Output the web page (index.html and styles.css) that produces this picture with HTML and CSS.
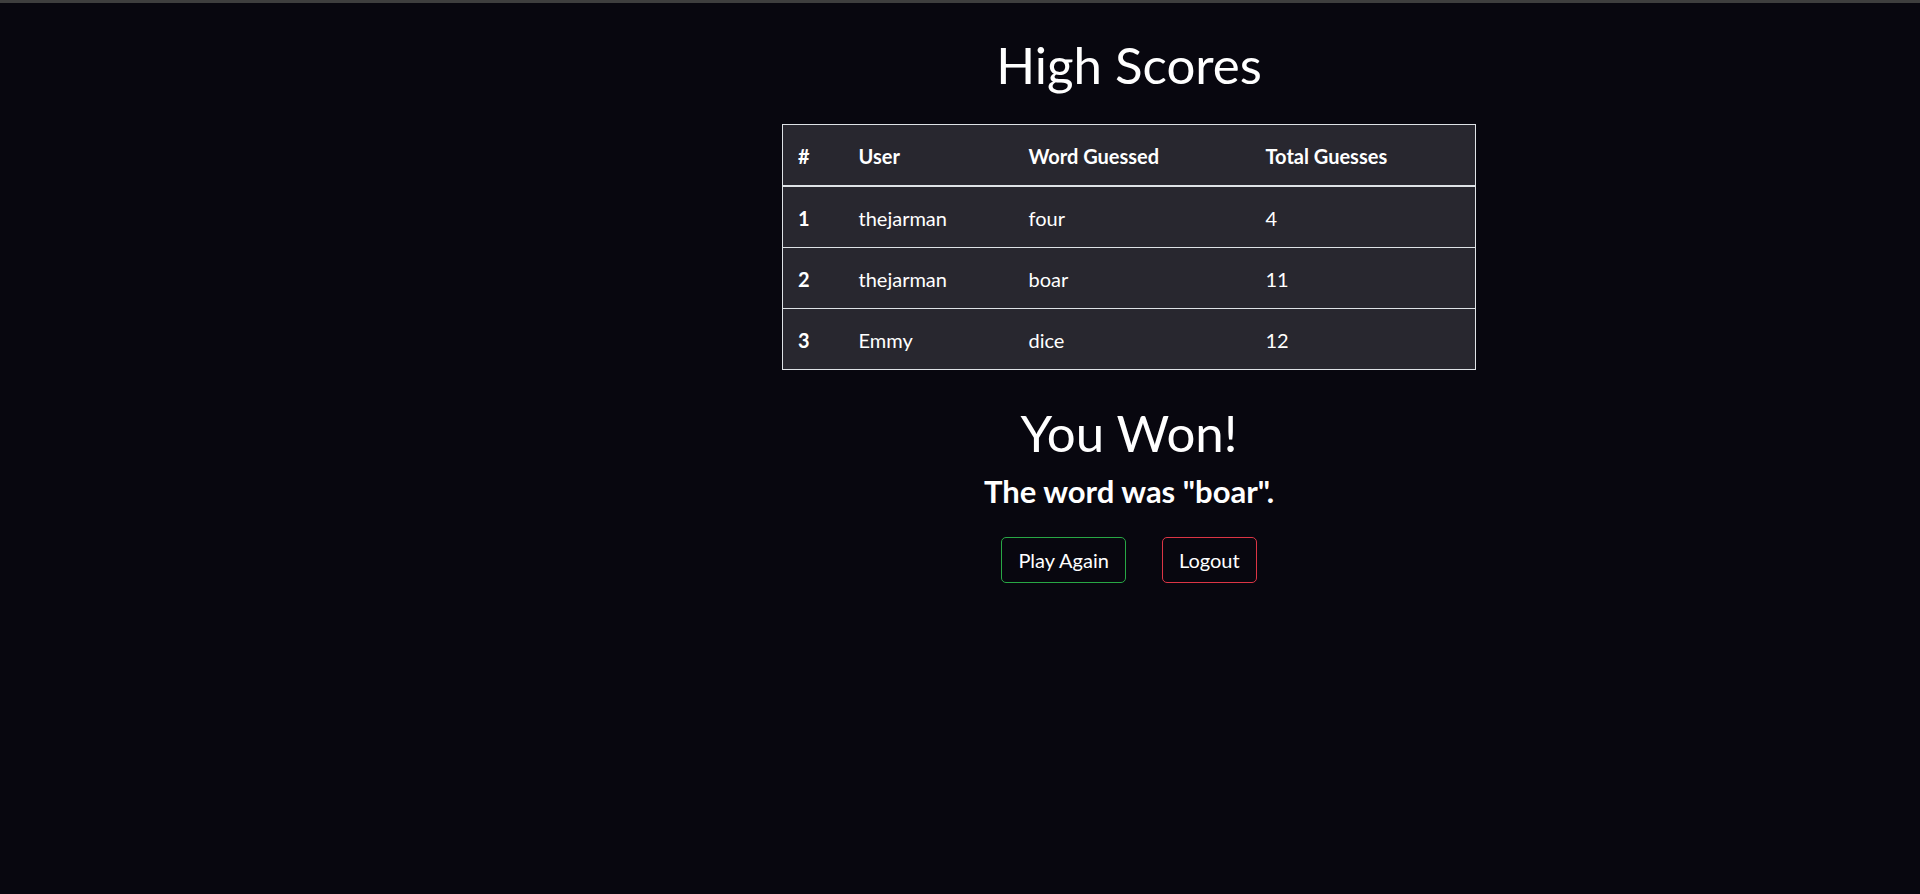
FILE: index.html
```html
<!DOCTYPE html>
<html lang="en">
<head>
<meta charset="utf-8">
<title>High Scores</title>
<link rel="stylesheet" href="styles.css">
</head>
<body>
<div class="page">
  <aside class="side"></aside>
  <main class="main">
    <h1 class="title">High Scores</h1>
    <table class="scores">
      <colgroup>
        <col class="c1"><col class="c2"><col class="c3"><col class="c4">
      </colgroup>
      <thead>
        <tr><th>#</th><th>User</th><th>Word Guessed</th><th>Total Guesses</th></tr>
      </thead>
      <tbody>
        <tr><th>1</th><td>thejarman</td><td>four</td><td>4</td></tr>
        <tr><th>2</th><td>thejarman</td><td>boar</td><td>11</td></tr>
        <tr><th>3</th><td>Emmy</td><td>dice</td><td>12</td></tr>
      </tbody>
    </table>
    <h1 class="result">You Won!</h1>
    <h4 class="word">The word was "boar".</h4>
    <div class="actions">
      <button class="btn btn-green" type="button">Play Again</button>
      <button class="btn btn-red" type="button">Logout</button>
    </div>
  </main>
</div>
</body>
</html>
```
FILE: styles.css
```css
html, body {
  margin: 0;
  padding: 0;
}
body {
  background: #08070f;
  color: #fff;
  font-family: Lato, "Liberation Sans", sans-serif;
  font-size: 20px;
  line-height: 30px;
  border-top: 3px solid #3e3e3e;
  min-height: 891px;
}
.page {
  display: flex;
}
.side {
  width: 338px;
  flex: none;
}
.main {
  flex: 1;
  display: flex;
  flex-direction: column;
  align-items: center;
}
.title, .result {
  font-size: 51px;
  line-height: 60px;
  font-weight: 400;
  margin: 0 0 10px;
}
.title {
  margin-top: 32px;
  margin-bottom: 29px;
}
.result {
  margin-top: 33px;
}
.word {
  font-size: 31px;
  line-height: 36px;
  font-weight: 700;
  margin: 0 0 28px;
}
.scores {
  width: 693px;
  table-layout: fixed;
  border-collapse: collapse;
  background: #28272f;
  border: 1px solid #dee2e6;
}
.c1 { width: 61px; }
.c2 { width: 170px; }
.c3 { width: 237px; }
.c4 { width: 225px; }
.scores th, .scores td {
  padding: 16px 15px 14px;
  text-align: left;
  vertical-align: top;
  border-top: 1px solid #dee2e6;
  line-height: 30px;
}
.scores th {
  font-weight: 700;
}
.scores td {
  font-weight: 400;
}
.scores thead th {
  border-bottom: 2px solid #dee2e6;
}
.actions {
  display: flex;
  gap: 36px;
}
.btn {
  font-family: inherit;
  font-size: 20px;
  line-height: 30px;
  color: #fff;
  background: transparent;
  padding: 7px 16px;
  border-radius: 5px;
  border: 1px solid;
  cursor: pointer;
}
.btn-green { border-color: #28a745; }
.btn-red { border-color: #dc3545; }
```
